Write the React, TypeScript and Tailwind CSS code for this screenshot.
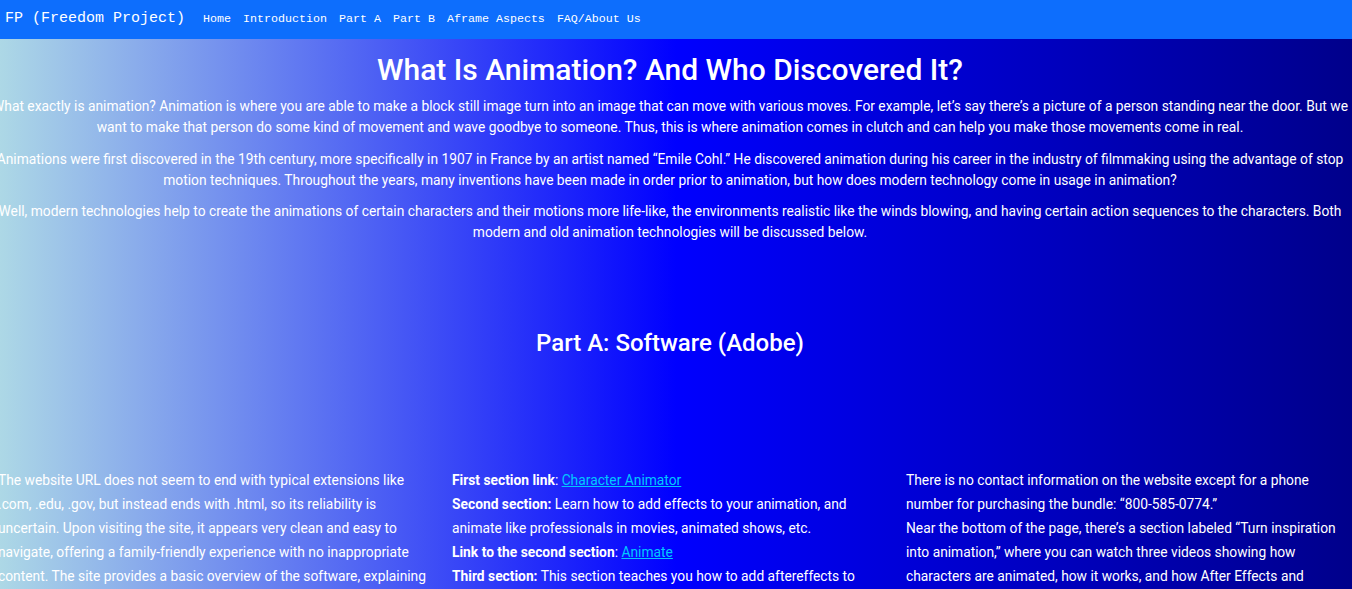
export default function App() {
  const links = ['Home', 'Introduction', 'Part A', 'Part B', 'Aframe Aspects', 'FAQ/About Us']

  return (
    <div className="min-h-[589px] overflow-hidden text-white bg-[linear-gradient(to_right,#add8e6,#0000ff_50%,#00008b)] font-['Roboto',sans-serif]">
      <nav className="h-[39px] bg-[#0d6efd] flex items-center pl-[5px] font-['Liberation_Mono',monospace]">
        <span className="text-[15px] mr-[18px]">FP (Freedom Project)</span>
        <ul className="flex gap-[12px] text-[11.67px]">
          {links.map(l => (
            <li key={l}>{l}</li>
          ))}
        </ul>
      </nav>

      <section className="-ml-3 w-[1364px] text-center text-[13.8px] leading-[21px]">
        <h1 className="text-[30px] leading-[36px] font-medium mt-[13px] mb-[8px]">What Is Animation? And Who Discovered It?</h1>
        <p className="mb-[11px]">
          What exactly is animation? Animation is where you are able to make a block still image turn into an image that can move with various moves. For example, let’s say there’s a picture of a person standing near the door. But we want to make that person do some kind of movement and wave goodbye to someone. Thus, this is where animation comes in clutch and can help you make those movements come in real.
        </p>
        <p className="mb-[10px]">
          Animations were first discovered in the 19th century, more specifically in 1907 in France by an artist named “Emile Cohl.” He discovered animation during his career in the industry of filmmaking using the advantage of stop motion techniques. Throughout the years, many inventions have been made in order prior to animation, but how does modern technology come in usage in animation?
        </p>
        <p>
          Well, modern technologies help to create the animations of certain characters and their motions more life-like, the environments realistic like the winds blowing, and having certain action sequences to the characters. Both modern and old animation technologies will be discussed below.
        </p>
        <h2 className="text-[24px] leading-[29px] font-medium mt-[86px]">Part A: Software (Adobe)</h2>
      </section>

      <section className="-ml-[14px] mt-[110px] grid grid-cols-[454px_454px_454px] text-[13.8px] leading-[24px]">
        <div className="px-3">
          <p>
            The website URL does not seem to end with typical extensions like .com, .edu, .gov, but instead ends with .html, so its reliability is uncertain. Upon visiting the site, it appears very clean and easy to navigate, offering a family-friendly experience with no inappropriate content. The site provides a basic overview of the software, explaining
          </p>
        </div>
        <div className="px-3">
          <p>
            <b>First section link</b>: <a href="#" className="text-[#00c8ff] underline">Character Animator</a>
            <br />
            <b>Second section:</b> Learn how to add effects to your animation, and animate like professionals in movies, animated shows, etc.
            <br />
            <b>Link to the second section</b>: <a href="#" className="text-[#00c8ff] underline">Animate</a>
            <br />
            <b>Third section:</b> This section teaches you how to add aftereffects to
          </p>
        </div>
        <div className="px-3">
          <p>
            There is no contact information on the website except for a phone number for purchasing the bundle: “800-585-0774.”
            <br />
            Near the bottom of the page, there’s a section labeled “Turn inspiration into animation,” where you can watch three videos showing how characters are animated, how it works, and how After Effects and
          </p>
        </div>
      </section>
    </div>
  )
}
